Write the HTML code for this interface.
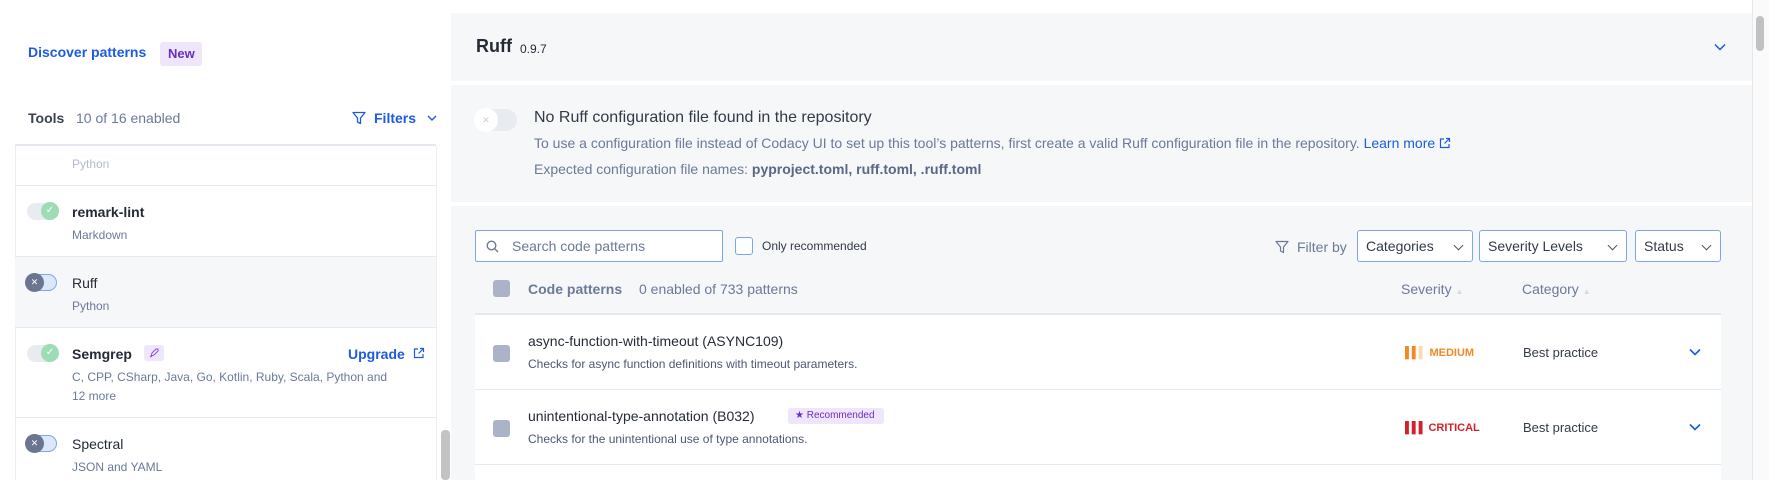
<!DOCTYPE html>
<html><head><meta charset="utf-8"><style>
*{box-sizing:border-box;margin:0;padding:0}
body{width:1769px;height:480px;overflow:hidden;background:#fff;font-family:"Liberation Sans",Arial,sans-serif;position:relative;color:#252b36}
.a{position:absolute;white-space:nowrap}
.blue{color:#1d5be0}
.g{color:#6b7a99}
.tog{position:absolute;width:30px;height:17px;border-radius:9px}
.sep{position:absolute;left:15px;width:421px;height:1px;background:#e6e9ef}
.name{font-size:14px;font-weight:bold}
.sub{font-size:12px;color:#6b7a99}
.cb{position:absolute;width:17px;height:17px;border-radius:3px;background:#aab3c8}
.sel{position:absolute;top:230px;height:32px;border:1px solid #7ea6ef;border-radius:3px;background:#fff;font-size:14px;padding:7px 0 0 8px;color:#333a47}
.chev{position:absolute;right:10px;top:11px;width:7px;height:7px;border-right:1.4px solid #555;border-bottom:1.4px solid #555;transform:rotate(45deg)}
.ok{position:absolute;width:18px;height:18px;border-radius:50%;background:#9ddcb4;color:#fff;font-size:10px;text-align:center;line-height:18px}
</style></head><body>
<div class="a blue" style="left:28px;top:44px;font-size:14px;font-weight:bold">Discover patterns</div>
<div class="a" style="left:160px;top:42px;width:42px;height:24px;background:#efe6fb;border-radius:3px;color:#6a2fc4;font-size:13px;font-weight:bold;padding:4px 0 0 8px">New</div>
<div class="a" style="left:28px;top:110px;font-size:14px;font-weight:bold;color:#3b4252">Tools</div>
<div class="a g" style="left:76px;top:110px;font-size:14px">10 of 16 enabled</div>
<svg class="a" style="left:352px;top:111px" width="14" height="14" viewBox="0 0 14 14"><path d="M1 1.5h12L8.5 7v5.5L5.5 11V7z" fill="none" stroke="#1d5be0" stroke-width="1.3" stroke-linejoin="round"/></svg>
<div class="a blue" style="left:374px;top:110px;font-size:14px;font-weight:bold">Filters</div>
<svg class="a" style="left:427px;top:114px" width="10" height="8"><path d="M1 2l4 4 4-4" fill="none" stroke="#1d5be0" stroke-width="1.4"/></svg>
<div class="a" style="left:15px;top:144px;width:421px;height:2px;background:#e3e7ee"></div>
<div class="a" style="left:15px;top:146px;width:1px;height:334px;background:#eceef2"></div>
<div class="a" style="left:72px;top:157px;font-size:12px;color:#b3bccd">Python</div>
<div class="sep" style="top:185px"></div>
<div class="tog" style="left:27px;top:203px;background:#e8ebf0"></div><div class="ok" style="left:41px;top:202px">✓</div>
<div class="a name" style="left:72px;top:204px">remark-lint</div>
<div class="a sub" style="left:72px;top:228px">Markdown</div>
<div class="sep" style="top:256px"></div>
<div class="a" style="left:15px;top:257px;width:421px;height:70px;background:#f6f7f9"></div>
<div class="tog" style="left:27px;top:274px;background:#dbe7fb;border:1px solid #7ea6ef"></div><div class="a" style="left:25px;top:273px;width:19px;height:19px;border-radius:50%;background:#6b7590;color:#fff;font-size:9px;text-align:center;line-height:19px">✕</div>
<div class="a" style="left:72px;top:275px;font-size:14px">Ruff</div>
<div class="a sub" style="left:72px;top:299px">Python</div>
<div class="sep" style="top:327px"></div>
<div class="tog" style="left:27px;top:345px;background:#e8ebf0"></div><div class="ok" style="left:41px;top:344px">✓</div>
<div class="a name" style="left:72px;top:346px">Semgrep</div>
<div class="a" style="left:144px;top:345px;width:20px;height:16px;background:#efe6fb;border-radius:3px"></div>
<svg class="a" style="left:148px;top:347px" width="12" height="12"><path d="M3 9l1-3 4-4 2 0 0 2-4 4z M2 10l2-1" fill="none" stroke="#8a4fe0" stroke-width="1"/></svg>
<div class="a blue" style="left:348px;top:346px;font-size:14px;font-weight:bold">Upgrade</div>
<svg class="a" style="left:413px;top:347px" width="12" height="12"><path d="M5 2H1.5v8.5H10V7M7 1.5h3.5V5M10.5 1.5L5.5 6.5" fill="none" stroke="#1d5be0" stroke-width="1.2"/></svg>
<div class="a sub" style="left:72px;top:370px">C, CPP, CSharp, Java, Go, Kotlin, Ruby, Scala, Python and</div>
<div class="a sub" style="left:72px;top:389px">12 more</div>
<div class="sep" style="top:417px"></div>
<div class="tog" style="left:27px;top:435px;background:#dbe7fb;border:1px solid #7ea6ef"></div><div class="a" style="left:25px;top:434px;width:19px;height:19px;border-radius:50%;background:#6b7590;color:#fff;font-size:9px;text-align:center;line-height:19px">✕</div>
<div class="a" style="left:72px;top:436px;font-size:14px">Spectral</div>
<div class="a sub" style="left:72px;top:460px">JSON and YAML</div>
<div class="a" style="left:436px;top:146px;width:1px;height:334px;background:#eceef2"></div>
<div class="a" style="left:441px;top:430px;width:9px;height:50px;background:#c3c3c3;border-radius:4px"></div>
<div class="a" style="left:451px;top:13px;width:1301px;height:68px;background:#f6f7f9"></div>
<div class="a" style="left:476px;top:36px;font-size:18px;font-weight:bold">Ruff</div>
<div class="a" style="left:520px;top:42px;font-size:12px">0.9.7</div>
<svg class="a" style="left:1714px;top:43px" width="12" height="8"><path d="M1 1.5l5 5 5-5" fill="none" stroke="#1d5be0" stroke-width="1.5"/></svg>
<div class="a" style="left:451px;top:85px;width:1301px;height:117px;background:#f6f7f9"></div>
<div class="tog" style="left:474px;top:109px;width:43px;height:22px;border-radius:11px;background:#e8ebf0"></div><div class="a" style="left:474px;top:108px;width:24px;height:24px;border-radius:50%;background:#fff;color:#ccd;font-size:9px;text-align:center;line-height:24px">✕</div>
<div class="a" style="left:534px;top:109px;font-size:16px;color:#333a47">No Ruff configuration file found in the repository</div>
<div class="a g" style="left:534px;top:135px;font-size:14px">To use a configuration file instead of Codacy UI to set up this tool’s patterns, first create a valid Ruff configuration file in the repository. <span class="blue">Learn more</span> <svg width="12" height="12" style="vertical-align:-1px"><path d="M5 2H1.5v8.5H10V7M7 1.5h3.5V5M10.5 1.5L5.5 6.5" fill="none" stroke="#1d5be0" stroke-width="1.2"/></svg></div>
<div class="a g" style="left:534px;top:161px;font-size:14px">Expected configuration file names: <b style="color:#5a6785">pyproject.toml, ruff.toml, .ruff.toml</b></div>
<div class="a" style="left:451px;top:206px;width:1301px;height:274px;background:#f6f7f9"></div>
<div class="a" style="left:1752px;top:0;width:17px;height:480px;background:#fafafa;border-left:1px solid #e8e8e8"></div>
<div class="a" style="left:1756px;top:16px;width:8px;height:35px;background:#c1c1c1;border-radius:4px"></div>
<div class="a" style="left:475px;top:230px;width:248px;height:32px;border:1px solid #7ea6ef;border-radius:2px;background:#fff"></div>
<svg class="a" style="left:486px;top:240px" width="13" height="13"><circle cx="5.5" cy="5.5" r="4.3" fill="none" stroke="#6b7a99" stroke-width="1.4"/><path d="M8.7 8.7l3.3 3.3" stroke="#6b7a99" stroke-width="1.4"/></svg>
<div class="a g" style="left:512px;top:238px;font-size:14px">Search code patterns</div>
<div class="a" style="left:735px;top:237px;width:18px;height:18px;border:1.3px solid #7ea6ef;border-radius:3px;background:#fff"></div>
<div class="a" style="left:762px;top:239px;font-size:12px;color:#333a47">Only recommended</div>
<svg class="a" style="left:1275px;top:240px" width="14" height="14" viewBox="0 0 14 14"><path d="M1 1.5h12L8.5 7v5.5L5.5 11V7z" fill="none" stroke="#6b7a99" stroke-width="1.2" stroke-linejoin="round"/></svg>
<div class="a g" style="left:1297px;top:239px;font-size:14px">Filter by</div>
<div class="sel" style="left:1357px;width:116px">Categories<span class="chev"></span></div>
<div class="sel" style="left:1479px;width:148px">Severity Levels<span class="chev"></span></div>
<div class="sel" style="left:1635px;width:86px">Status<span class="chev"></span></div>
<div class="cb" style="left:493px;top:280px"></div>
<div class="a" style="left:528px;top:281px;font-size:14px;font-weight:bold;color:#6b7a99">Code patterns</div>
<div class="a g" style="left:639px;top:281px;font-size:14px">0 enabled of 733 patterns</div>
<div class="a g" style="left:1401px;top:281px;font-size:14px">Severity <span style="color:#d5dae3;font-size:8px">▲</span></div>
<div class="a g" style="left:1522px;top:281px;font-size:14px">Category <span style="color:#d5dae3;font-size:8px">▲</span></div>
<div class="a" style="left:475px;top:313px;width:1246px;height:2px;background:#e6e9ef"></div>
<div class="a" style="left:475px;top:315px;width:1246px;height:165px;background:#fff"></div>
<div class="cb" style="left:493px;top:345px"></div>
<div class="a" style="left:528px;top:333px;font-size:14px">async-function-with-timeout (ASYNC109)</div>
<div class="a" style="left:528px;top:357px;font-size:12px;color:#4d5873">Checks for async function definitions with timeout parameters.</div>
<div class="a" style="left:1405px;top:347px;font-size:11px;font-weight:bold;color:#f08a24"><span style="letter-spacing:-1px">▌▌</span><span style="color:#fbd9b5">▌</span> MEDIUM</div>
<div class="a" style="left:1523px;top:345px;font-size:13px;color:#333a47">Best practice</div>
<svg class="a" style="left:1689px;top:348px" width="12" height="8"><path d="M1 1.5l5 5 5-5" fill="none" stroke="#1d5be0" stroke-width="1.6"/></svg>
<div class="a" style="left:475px;top:389px;width:1246px;height:1px;background:#e6e9ef"></div>
<div class="cb" style="left:493px;top:420px"></div>
<div class="a" style="left:528px;top:408px;font-size:14px">unintentional-type-annotation (B032)</div>
<div class="a" style="left:788px;top:408px;width:96px;height:16px;background:#efe6fb;border-radius:3px;font-size:10px;color:#6a2fc4;padding:2px 0 0 7px">★ Recommended</div>
<div class="a" style="left:528px;top:432px;font-size:12px;color:#4d5873">Checks for the unintentional use of type annotations.</div>
<div class="a" style="left:1405px;top:422px;font-size:11px;font-weight:bold;color:#d4202e"><span style="letter-spacing:-1px">▌▌▌</span> CRITICAL</div>
<div class="a" style="left:1523px;top:420px;font-size:13px;color:#333a47">Best practice</div>
<svg class="a" style="left:1689px;top:423px" width="12" height="8"><path d="M1 1.5l5 5 5-5" fill="none" stroke="#1d5be0" stroke-width="1.6"/></svg>
<div class="a" style="left:475px;top:464px;width:1246px;height:1px;background:#e6e9ef"></div>
</body></html>
